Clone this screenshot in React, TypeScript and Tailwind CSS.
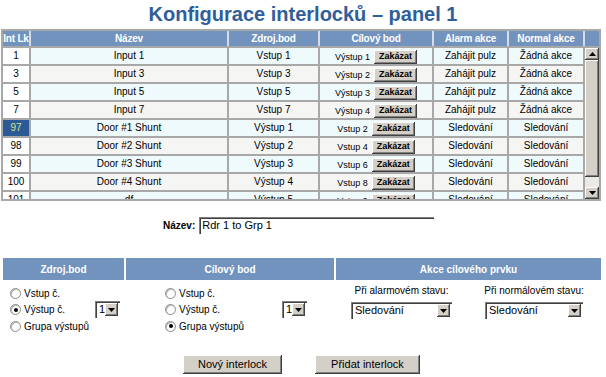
import React from "react"

type Row = {
  id: string
  name: string
  src: string
  dst: string
  alarm: string
  normal: string
}

const rows: Row[] = [
  { id: "1", name: "Input 1", src: "Vstup 1", dst: "Výstup 1", alarm: "Zahájit pulz", normal: "Žádná akce" },
  { id: "3", name: "Input 3", src: "Vstup 3", dst: "Výstup 2", alarm: "Zahájit pulz", normal: "Žádná akce" },
  { id: "5", name: "Input 5", src: "Vstup 5", dst: "Výstup 3", alarm: "Zahájit pulz", normal: "Žádná akce" },
  { id: "7", name: "Input 7", src: "Vstup 7", dst: "Výstup 4", alarm: "Zahájit pulz", normal: "Žádná akce" },
  { id: "97", name: "Door #1 Shunt", src: "Výstup 1", dst: "Vstup 2", alarm: "Sledování", normal: "Sledování" },
  { id: "98", name: "Door #2 Shunt", src: "Výstup 2", dst: "Vstup 4", alarm: "Sledování", normal: "Sledování" },
  { id: "99", name: "Door #3 Shunt", src: "Výstup 3", dst: "Vstup 6", alarm: "Sledování", normal: "Sledování" },
  { id: "100", name: "Door #4 Shunt", src: "Výstup 4", dst: "Vstup 8", alarm: "Sledování", normal: "Sledování" },
  { id: "101", name: "df", src: "Výstup 5", dst: "Vstup 9", alarm: "Sledování", normal: "Sledování" },
]

const bevel = "shadow-[inset_-1px_-1px_#404040,inset_1px_1px_#ffffff,inset_-2px_-2px_#808080]"
const inset = "shadow-[inset_1px_1px_#808080,inset_2px_2px_#404040,inset_-1px_-1px_#ffffff]"

function Arrow({ up }: { up?: boolean }) {
  return (
    <svg width="7" height="4" viewBox="0 0 7 4">
      <path d={up ? "M0 4 L3.5 0 L7 4 Z" : "M0 0 L7 0 L3.5 4 Z"} fill="#000" />
    </svg>
  )
}

function Radio({ checked }: { checked?: boolean }) {
  return (
    <span className="w-[11px] h-[11px] rounded-full bg-white border border-[#8a8a8a] shadow-[inset_1px_1px_#b8b8b8] flex items-center justify-center shrink-0">
      {checked && <span className="w-[4px] h-[4px] rounded-full bg-black" />}
    </span>
  )
}

function Select({ value, className }: { value: string; className: string }) {
  return (
    <div className={`flex items-center bg-white h-[17px] p-[2px] ${inset} ${className}`}>
      <span className="flex-1 pl-[2px] text-[11px] leading-none text-black">{value}</span>
      <span className={`w-[13px] h-[13px] bg-[#d4d0c8] flex items-center justify-center ${bevel}`}>
        <Arrow />
      </span>
    </div>
  )
}

function Button({ label, className }: { label: string; className: string }) {
  return (
    <div className={`h-[19px] bg-[#d4d0c8] flex items-center justify-center text-[11px] text-black ${bevel} ${className}`}>
      {label}
    </div>
  )
}

const cols = "grid grid-cols-[26px_196px_89px_112px_73px_74px] gap-x-[2px]"

export default function App() {
  return (
    <div className="w-[606px] h-[377px] bg-white overflow-hidden" style={{ fontFamily: '"Liberation Sans", Arial, sans-serif' }}>
      <h1 className="h-[29px] leading-[29px] text-center text-[20px] font-bold text-[#2f5e9b]">
        Konfigurace interlocků – panel 1
      </h1>

      {/* seznam interlocků */}
      <div className="ml-[1px] w-[600px] bg-[#a8a8a8] p-[2px]">
        <div className="grid grid-cols-[26px_196px_89px_112px_73px_74px_14px] gap-x-[2px] bg-[#d6dce5] h-[15px]">
          {["Int Lk", "Název", "Zdroj.bod", "Cílový bod", "Alarm akce", "Normal akce", ""].map((h, i) => (
            <div key={i} className="bg-[#7193bd] text-white font-bold text-[10px] leading-[15px] text-center whitespace-nowrap overflow-hidden tracking-[-0.2px]">
              {h}
            </div>
          ))}
        </div>
        <div className="flex gap-x-[2px] mt-[2px]">
          <div className="w-[580px] h-[151px] overflow-hidden flex flex-col gap-y-[2px]">
            {rows.map((r, i) => {
              const bg = i % 2 === 0 ? "bg-[#effafd]" : "bg-[#f5f5f3]"
              const sel = r.id === "97"
              return (
                <div key={r.id} className={`${cols} h-[16px] shrink-0 text-[10px] leading-[16px] text-black text-center`}>
                  <div className={sel ? "bg-[#2c5a97] text-[#d2e68c]" : "bg-white"}>{r.id}</div>
                  <div className={bg}>{r.name}</div>
                  <div className={bg}>{r.src}</div>
                  <div className={`${bg} flex items-end justify-center gap-[4px]`}>
                    <span className="text-[9px] leading-[12px] pb-[1px]">{r.dst}</span>
                    <span className={`w-[43px] h-[14px] bg-[#d4d0c8] text-[9px] font-bold leading-[12px] ${bevel}`}>
                      Zakázat
                    </span>
                  </div>
                  <div className={bg}>{r.alarm}</div>
                  <div className={bg}>{r.normal}</div>
                </div>
              )
            })}
          </div>
          <div className="w-[14px] h-[151px] flex flex-col bg-[#ebe9e4]">
            <div className={`h-[12px] bg-[#d4d0c8] flex items-center justify-center ${bevel}`}>
              <Arrow up />
            </div>
            <div className={`h-[117px] bg-[#d4d0c8] ${bevel}`} />
            <div className="flex-1" />
            <div className={`h-[12px] bg-[#d4d0c8] flex items-center justify-center ${bevel}`}>
              <Arrow />
            </div>
          </div>
        </div>
      </div>

      {/* název */}
      <div className="mt-[16px] ml-[163px] flex items-center gap-[4px] h-[17px]">
        <span className="text-[10px] font-bold text-black">Název:</span>
        <div className={`w-[235px] h-[17px] bg-white flex items-center pl-[3px] text-[11px] text-black ${inset}`}>
          Rdr 1 to Grp 1
        </div>
      </div>

      {/* nastavení */}
      <div className="mt-[24px] ml-[3px] grid grid-cols-[121px_208px_265px] gap-x-[2px]">
        <div className="h-[22px] bg-[#7193bd] text-white font-bold text-[10px] flex items-center justify-center">Zdroj.bod</div>
        <div className="h-[22px] bg-[#7193bd] text-white font-bold text-[10px] flex items-center justify-center">Cílový bod</div>
        <div className="h-[22px] bg-[#7193bd] text-white font-bold text-[10px] flex items-center justify-center">Akce cílového prvku</div>

        <div className="h-[60px] pt-[5px] pl-[7px] flex flex-col text-[10px] text-black">
          <div className="h-[16.5px] flex items-center gap-[3px]"><Radio /> Vstup č.</div>
          <div className="h-[16.5px] flex items-center">
            <div className="w-[85px] flex items-center gap-[3px]"><Radio checked /> Výstup č.</div>
            <Select value="1" className="w-[25px]" />
          </div>
          <div className="h-[16.5px] flex items-center gap-[3px]"><Radio /> Grupa výstupů</div>
        </div>

        <div className="h-[60px] pt-[5px] pl-[39px] flex flex-col text-[10px] text-black">
          <div className="h-[16.5px] flex items-center gap-[3px]"><Radio /> Vstup č.</div>
          <div className="h-[16.5px] flex items-center">
            <div className="w-[117px] flex items-center gap-[3px]"><Radio /> Výstup č.</div>
            <Select value="1" className="w-[25px]" />
          </div>
          <div className="h-[16.5px] flex items-center gap-[3px]"><Radio checked /> Grupa výstupů</div>
        </div>

        <div className="h-[60px] pt-[5px] pl-[15px] flex gap-[33px] text-[10px] text-black">
          <div className="w-[101px] flex flex-col items-center gap-[5px]">
            <span className="leading-[12px] whitespace-nowrap">Při alarmovém stavu:</span>
            <Select value="Sledování" className="w-[101px]" />
          </div>
          <div className="w-[98px] flex flex-col items-center gap-[5px]">
            <span className="leading-[12px] whitespace-nowrap">Při normálovém stavu:</span>
            <Select value="Sledování" className="w-[98px]" />
          </div>
        </div>
      </div>

      <div className="mt-[15px] ml-[183px] flex gap-[33px]">
        <Button label="Nový interlock" className="w-[99px]" />
        <Button label="Přidat interlock" className="w-[105px]" />
      </div>
    </div>
  )
}
